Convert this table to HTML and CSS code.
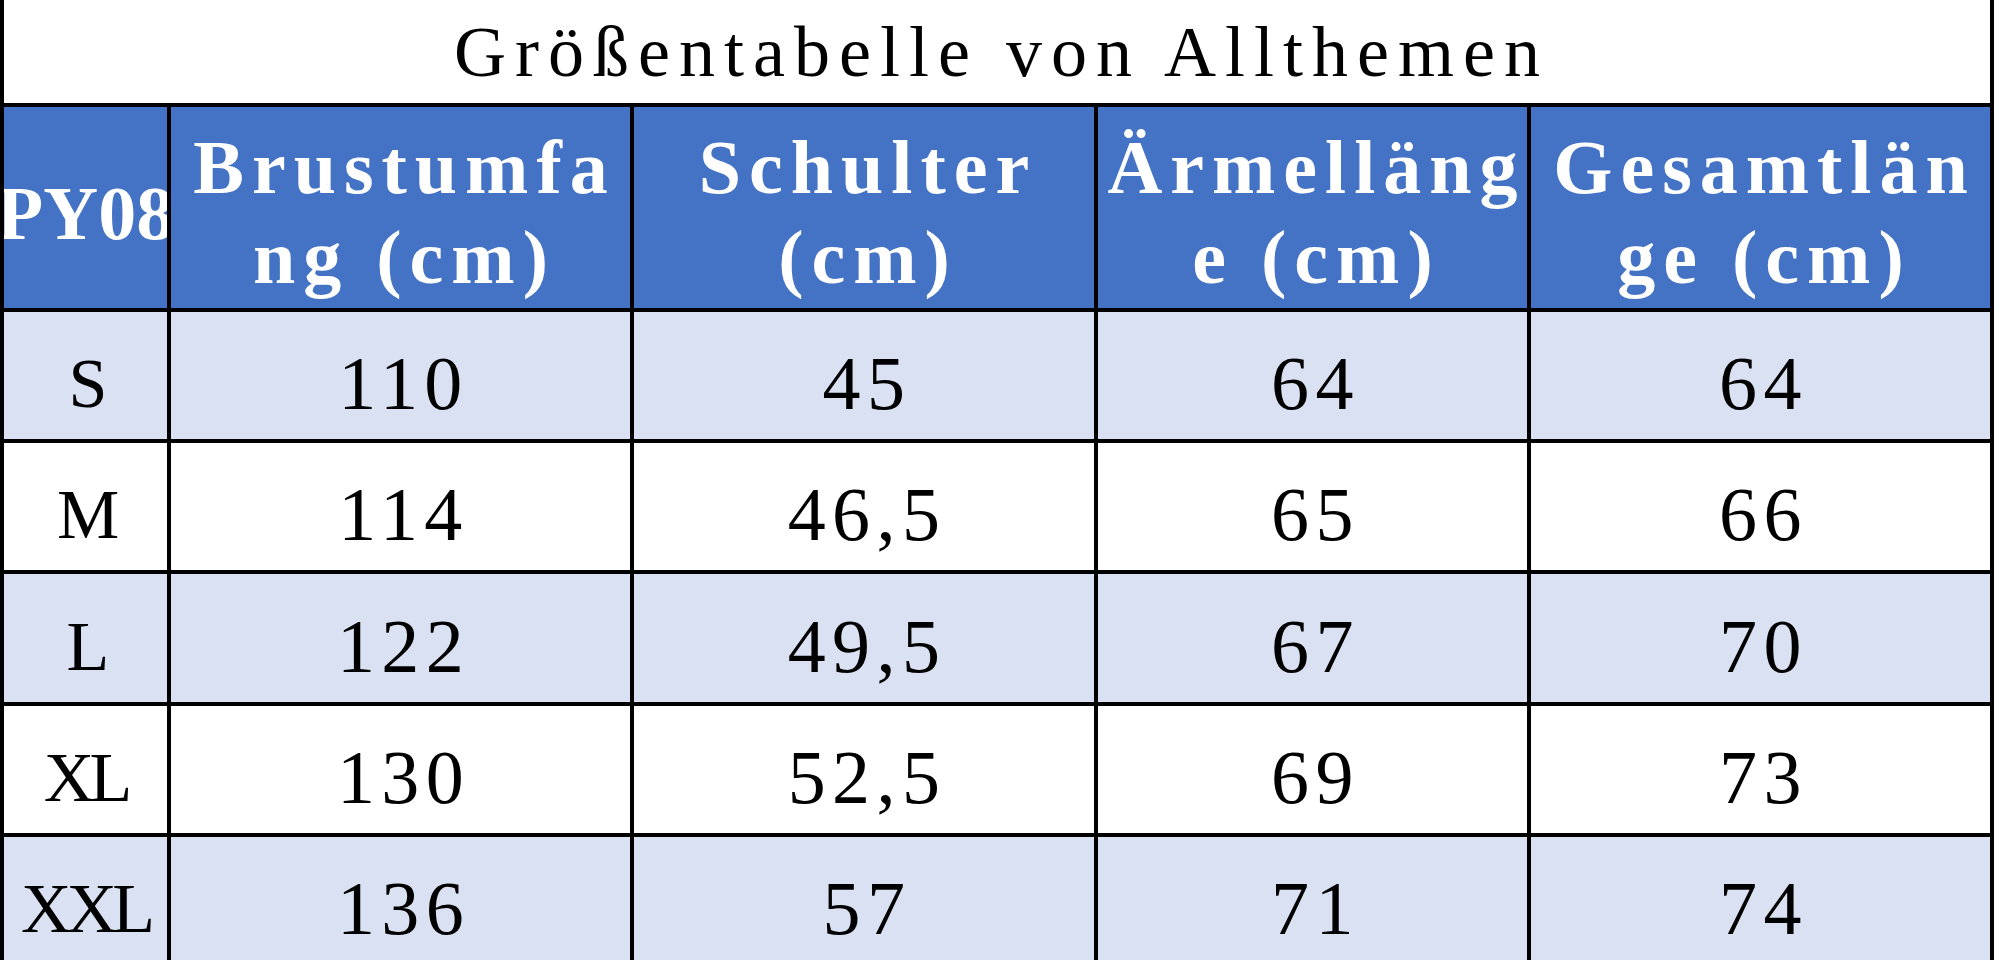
FILE: index.html
```html
<!DOCTYPE html>
<html lang="de">
<head>
<meta charset="utf-8">
<title>Größentabelle von Allthemen</title>
<link rel="stylesheet" href="styles.css">
</head>
<body>
<div class="sheet" role="table" aria-label="Größentabelle von Allthemen">
  <div class="cell title" role="caption">Größentabelle von Allthemen</div>

  <div class="cell head code" role="columnheader">PY08</div>
  <div class="cell head" role="columnheader">Brustumfa<br>ng (cm)</div>
  <div class="cell head" role="columnheader">Schulter<br>(cm)</div>
  <div class="cell head" role="columnheader">Ärmelläng<br>e (cm)</div>
  <div class="cell head" role="columnheader">Gesamtlän<br>ge (cm)</div>

  <div class="cell body shade size" role="cell">S</div>
  <div class="cell body shade" role="cell">110</div>
  <div class="cell body shade" role="cell">45</div>
  <div class="cell body shade" role="cell">64</div>
  <div class="cell body shade" role="cell">64</div>

  <div class="cell body size" role="cell">M</div>
  <div class="cell body" role="cell">114</div>
  <div class="cell body" role="cell">46,5</div>
  <div class="cell body" role="cell">65</div>
  <div class="cell body" role="cell">66</div>

  <div class="cell body shade size" role="cell">L</div>
  <div class="cell body shade" role="cell">122</div>
  <div class="cell body shade" role="cell">49,5</div>
  <div class="cell body shade" role="cell">67</div>
  <div class="cell body shade" role="cell">70</div>

  <div class="cell body size" role="cell">XL</div>
  <div class="cell body" role="cell">130</div>
  <div class="cell body" role="cell">52,5</div>
  <div class="cell body" role="cell">69</div>
  <div class="cell body" role="cell">73</div>

  <div class="cell body shade size" role="cell">XXL</div>
  <div class="cell body shade" role="cell">136</div>
  <div class="cell body shade" role="cell">57</div>
  <div class="cell body shade" role="cell">71</div>
  <div class="cell body shade" role="cell">74</div>
</div>
</body>
</html>
```

FILE: styles.css
```css
html {
  overflow: hidden;
  background: #ffffff;
}

body {
  margin: 0;
  background: #ffffff;
  font-family: "Liberation Serif", "Times New Roman", serif;
  color: #000000;
}

.sheet {
  display: grid;
  grid-template-columns: 167px 463px 464px 433px 463px;
  grid-template-rows: 107px 205px 131px 131px 132px 131px 131px;
  width: max-content;
  border-left: 4px solid #000000;
}

.cell {
  box-sizing: border-box;
  border-right: 4px solid #000000;
  border-bottom: 4px solid #000000;
  display: flex;
  align-items: center;
  justify-content: center;
  text-align: center;
  overflow: hidden;
  white-space: nowrap;
}

.title {
  grid-column: 1 / -1;
  background: #ffffff;
  font-size: 72px;
  letter-spacing: 9px;
  line-height: 90px;
  padding-left: 9px;
}

.head {
  background: #4472c4;
  color: #ffffff;
  font-weight: bold;
  font-size: 76px;
  letter-spacing: 8px;
  line-height: 90px;
  align-items: flex-start;
  padding: 15px 0 0 8px;
}

.head.code {
  align-items: center;
  padding: 10px 0 0;
  letter-spacing: 0;
}

.body {
  background: #ffffff;
  font-size: 76px;
  letter-spacing: 6.4px;
  line-height: 90px;
  padding: 15px 0 0 6px;
}

.body.size {
  font-size: 70px;
  letter-spacing: -5px;
  padding: 17px 0 0 0;
}

.body.shade {
  background: #d9e1f2;
}
```
